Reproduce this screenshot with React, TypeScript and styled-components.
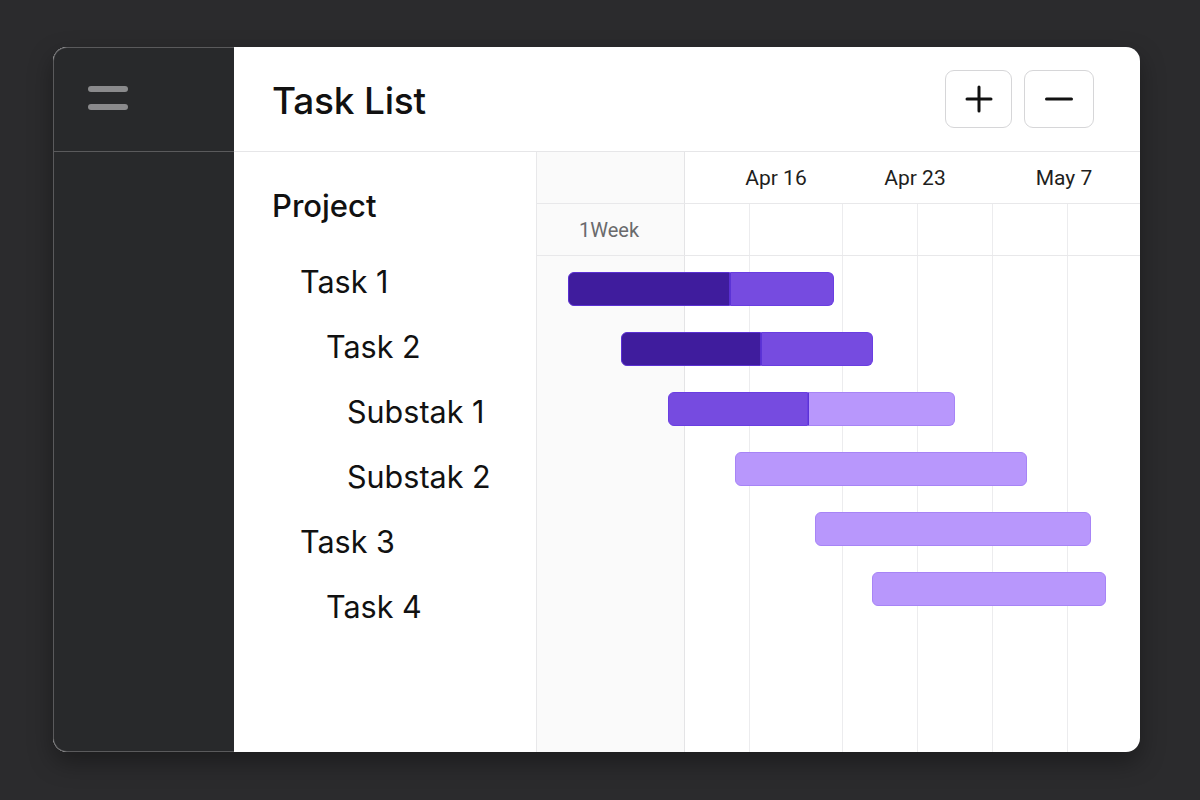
import styled, { createGlobalStyle } from 'styled-components';

const GlobalStyle = createGlobalStyle`
  html, body {
    margin: 0;
    padding: 0;
    background: #2b2b2d;
  }
  body {
    font-family: Inter, 'Noto Sans', sans-serif;
  }
  * {
    box-sizing: border-box;
  }
`;

const Page = styled.div`
  width: 1200px;
  height: 800px;
  padding: 47px 60px 0 53px;
`;

const Window = styled.div`
  width: 1087px;
  height: 705px;
  display: flex;
  border-radius: 14px;
  overflow: hidden;
  background: #ffffff;
  box-shadow: 0 10px 24px rgba(0, 0, 0, 0.35);
`;

const Sidebar = styled.aside`
  width: 181px;
  flex-shrink: 0;
  background: #28292b;
  border: 1px solid #5a5a5c;
  border-right: none;
  border-radius: 14px 0 0 14px;
  display: flex;
  flex-direction: column;
`;

const SidebarTop = styled.div`
  height: 104px;
  border-bottom: 1px solid #5a5a5c;
  padding: 38px 0 0 34px;
  display: flex;
  flex-direction: column;
  gap: 12px;
`;

const MenuBar = styled.span`
  display: block;
  width: 40px;
  height: 6px;
  border-radius: 3px;
  background: #8a8a8c;
`;

const Main = styled.main`
  flex: 1;
  display: flex;
  flex-direction: column;
  min-width: 0;
`;

const Header = styled.header`
  height: 105px;
  flex-shrink: 0;
  display: flex;
  align-items: center;
  justify-content: space-between;
  padding: 0 46px 0 38px;
  border-bottom: 1px solid #e6e6e8;
`;

const Title = styled.h1`
  margin: 3px 0 0;
  font-size: 37px;
  font-weight: 500;
  color: #111111;
  letter-spacing: -0.2px;
`;

const Tools = styled.div`
  display: flex;
  gap: 12px;
  margin-top: -1px;
`;

const ToolButton = styled.button<{ $w: number }>`
  width: ${(p) => p.$w}px;
  height: 58px;
  display: flex;
  align-items: center;
  justify-content: center;
  background: #ffffff;
  border: 1px solid #d6d6d8;
  border-radius: 9px;
  padding: 0;
`;

const Content = styled.div`
  flex: 1;
  display: flex;
  min-height: 0;
`;

const TaskColumn = styled.div`
  width: 303px;
  flex-shrink: 0;
  border-right: 1px solid #e8e8ea;
  padding-top: 32px;
  display: flex;
  flex-direction: column;
`;

const ProjectName = styled.div`
  height: 44px;
  line-height: 44px;
  padding-left: 38px;
  margin-bottom: 21px;
  font-size: 31px;
  font-weight: 500;
  color: #111111;
`;

const TaskItem = styled.div<{ $indent: number }>`
  height: 65px;
  line-height: 65px;
  padding-left: ${(p) => p.$indent}px;
  font-size: 30.5px;
  color: #111111;
`;

const Gantt = styled.div`
  flex: 1;
  display: flex;
  flex-direction: column;
  position: relative;
  min-width: 0;
`;

const DateRow = styled.div`
  height: 52px;
  flex-shrink: 0;
  display: flex;
  border-bottom: 1px solid #e8e8ea;
`;

const LabelCell = styled.div`
  width: 148px;
  flex-shrink: 0;
  background: #fafafa;
  border-right: 1px solid #e4e4e6;
`;

const Dates = styled.div`
  flex: 1;
  display: flex;
  align-items: center;
  font-family: Roboto, 'Liberation Sans', sans-serif;
  font-size: 21px;
  color: #1e1e20;
`;

const DateLabel = styled.span<{ $offset: number }>`
  width: 140px;
  margin-left: ${(p) => p.$offset}px;
  text-align: center;
`;

const Chart = styled.div`
  flex: 1;
  position: relative;
  display: flex;
  flex-direction: column;
`;

const GridLayer = styled.div`
  position: absolute;
  inset: 0;
  display: grid;
  grid-template-columns: 148px 65px 93px 75px 75px 75px 1fr;
  pointer-events: none;
`;

const GridCol = styled.div<{ $shade?: boolean; $strong?: boolean }>`
  background: ${(p) => (p.$shade ? '#fafafa' : 'transparent')};
  border-right: 1px solid ${(p) => (p.$strong ? '#e4e4e6' : '#ececee')};
  &:last-child {
    border-right: none;
  }
`;

const WeekRow = styled.div`
  height: 52px;
  flex-shrink: 0;
  position: relative;
  border-bottom: 1px solid #e8e8ea;
  display: flex;
`;

const WeekLabel = styled.div`
  width: 148px;
  display: flex;
  align-items: center;
  justify-content: center;
  padding-right: 4px;
  font-family: Roboto, 'Liberation Sans', sans-serif;
  font-size: 20px;
  color: #6a6a6c;
`;

const Bars = styled.div`
  position: relative;
  padding-top: 16px;
  display: flex;
  flex-direction: column;
`;

const BarRow = styled.div`
  height: 60px;
  display: flex;
  align-items: flex-start;
`;

const Bar = styled.div`
  height: 34px;
  display: flex;
`;

const toneFill = { dark: '#3f1c9d', mid: '#764be0', light: '#b897fc' };
const toneEdge = { dark: '#5a2fd2', mid: '#6a3ee2', light: '#a784f6' };

const Segment = styled.div<{ $tone: Tone }>`
  height: 100%;
  background: ${(p) => toneFill[p.$tone]};
  border: 1px solid ${(p) => toneEdge[p.$tone]};
  &:first-child {
    border-radius: 6px 0 0 6px;
  }
  &:last-child {
    border-radius: 0 6px 6px 0;
  }
  &:only-child {
    border-radius: 6px;
  }
  & + & {
    border-left: 1px solid #5b33d6;
  }
`;

type Tone = 'dark' | 'mid' | 'light';

interface TaskBar {
  left: number;
  width: number;
  split?: number;
  first: Tone;
  second: Tone;
}

const tasks = [
  { name: 'Task 1', indent: 66 },
  { name: 'Task 2', indent: 92 },
  { name: 'Substak 1', indent: 113 },
  { name: 'Substak 2', indent: 113 },
  { name: 'Task 3', indent: 66 },
  { name: 'Task 4', indent: 92 },
];

const bars: TaskBar[] = [
  { left: 31, width: 266, split: 162, first: 'dark', second: 'mid' },
  { left: 84, width: 252, split: 140, first: 'dark', second: 'mid' },
  { left: 131, width: 287, split: 140, first: 'mid', second: 'light' },
  { left: 198, width: 292, first: 'light', second: 'light' },
  { left: 278, width: 276, first: 'light', second: 'light' },
  { left: 335, width: 234, first: 'light', second: 'light' },
];

const PlusIcon = () => (
  <svg width="28" height="28" viewBox="0 0 28 28">
    <path d="M14 2v24M2 14h24" stroke="#111" strokeWidth="3" strokeLinecap="round" />
  </svg>
);

const MinusIcon = () => (
  <svg width="28" height="28" viewBox="0 0 28 28">
    <path d="M1.5 14h25" stroke="#111" strokeWidth="3" strokeLinecap="round" />
  </svg>
);

const App = () => {
  return (
    <>
      <GlobalStyle />
      <Page>
        <Window>
          <Sidebar>
            <SidebarTop>
              <MenuBar />
              <MenuBar />
            </SidebarTop>
          </Sidebar>
          <Main>
            <Header>
              <Title>Task List</Title>
              <Tools>
                <ToolButton $w={67} aria-label="Zoom in">
                  <PlusIcon />
                </ToolButton>
                <ToolButton $w={70} aria-label="Zoom out">
                  <MinusIcon />
                </ToolButton>
              </Tools>
            </Header>
            <Content>
              <TaskColumn>
                <ProjectName>Project</ProjectName>
                {tasks.map((t) => (
                  <TaskItem key={t.name} $indent={t.indent}>
                    {t.name}
                  </TaskItem>
                ))}
              </TaskColumn>
              <Gantt>
                <DateRow>
                  <LabelCell />
                  <Dates>
                    <DateLabel $offset={21}>Apr 16</DateLabel>
                    <DateLabel $offset={-1}>Apr 23</DateLabel>
                    <DateLabel $offset={9}>May 7</DateLabel>
                  </Dates>
                </DateRow>
                <Chart>
                  <GridLayer>
                    <GridCol $shade $strong />
                    <GridCol />
                    <GridCol />
                    <GridCol />
                    <GridCol />
                    <GridCol />
                    <GridCol />
                  </GridLayer>
                  <WeekRow>
                    <WeekLabel>1Week</WeekLabel>
                  </WeekRow>
                  <Bars>
                    {bars.map((b, i) => (
                      <BarRow key={i}>
                        <Bar style={{ marginLeft: b.left, width: b.width }}>
                          {b.split ? (
                            <>
                              <Segment $tone={b.first} style={{ width: b.split }} />
                              <Segment $tone={b.second} style={{ flex: 1 }} />
                            </>
                          ) : (
                            <Segment $tone={b.first} style={{ flex: 1 }} />
                          )}
                        </Bar>
                      </BarRow>
                    ))}
                  </Bars>
                </Chart>
              </Gantt>
            </Content>
          </Main>
        </Window>
      </Page>
    </>
  );
};

export default App;
